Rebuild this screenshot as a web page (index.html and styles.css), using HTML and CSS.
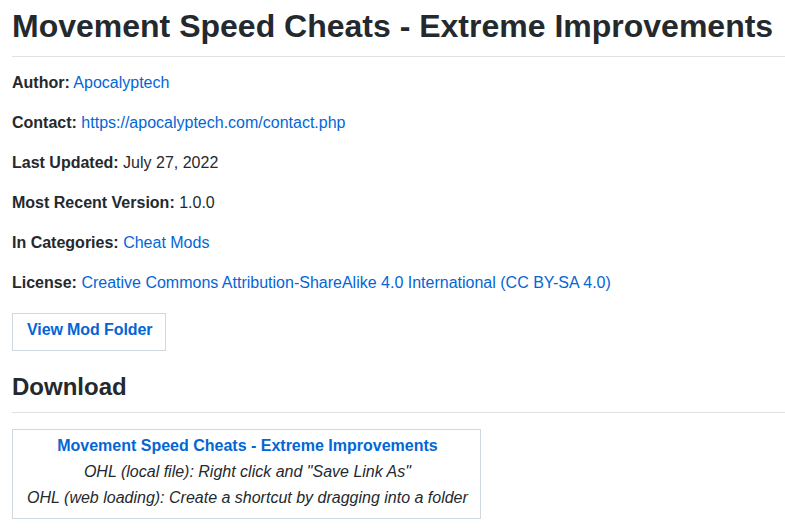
FILE: index.html
```html
<!DOCTYPE html>
<html>
<head>
<meta charset="utf-8">
<link rel="stylesheet" href="styles.css">
</head>
<body>
<div class="page">
  <h1 class="title">Movement Speed Cheats - Extreme Improvements</h1>
  <p class="meta"><strong>Author:</strong> <a href="#">Apocalyptech</a></p>
  <p class="meta"><strong>Contact:</strong> <a href="#">https://apocalyptech.com/contact.php</a></p>
  <p class="meta"><strong>Last Updated:</strong> July 27, 2022</p>
  <p class="meta"><strong>Most Recent Version:</strong> 1.0.0</p>
  <p class="meta"><strong>In Categories:</strong> <a href="#">Cheat Mods</a></p>
  <p class="meta"><strong>License:</strong> <a href="#">Creative Commons Attribution-ShareAlike 4.0 International (CC BY-SA 4.0)</a></p>
  <a class="button" href="#">View Mod Folder</a>
  <h2 class="section">Download</h2>
  <div class="download">
    <a class="dl-link" href="#">Movement Speed Cheats - Extreme Improvements</a>
    <div class="dl-note">OHL (local file): Right click and "Save Link As"</div>
    <div class="dl-note">OHL (web loading): Create a shortcut by dragging into a folder</div>
  </div>
</div>
</body>
</html>
```
FILE: styles.css
```css
html, body {
  margin: 0;
  padding: 0;
  background: #ffffff;
}
.page {
  padding: 6px 0 0 12px;
  font-family: "Liberation Sans", Arial, sans-serif;
  font-size: 16px;
  line-height: 24px;
  color: #24292e;
}
a {
  color: #0366d6;
  text-decoration: none;
}
.title {
  margin: 0 0 14px 0;
  font-size: 32px;
  line-height: 40px;
  font-weight: 700;
  white-space: nowrap;
  padding-bottom: 9.6px;
  border-bottom: 1px solid #dfe2e5;
}
.meta {
  margin: 0 0 16px 0;
}
.meta strong {
  font-weight: 700;
}
.button {
  display: inline-block;
  margin-top: 2px;
  padding: 4px 13px 8px 14px;
  border: 1px solid #d1d9e0;
  font-weight: 700;
  letter-spacing: -0.1px;
}
.section {
  margin: 21px 0 16px 0;
  font-size: 24px;
  line-height: 30px;
  font-weight: 700;
  padding-bottom: 10px;
  border-bottom: 1px solid #dfe2e5;
}
.download {
  display: inline-flex;
  flex-direction: column;
  align-items: center;
  padding: 3px 12px 7px 14px;
  border: 1px solid #d1d9e0;
  line-height: 26px;
}
.dl-link {
  font-weight: 700;
}
.dl-note {
  font-style: italic;
}
```
